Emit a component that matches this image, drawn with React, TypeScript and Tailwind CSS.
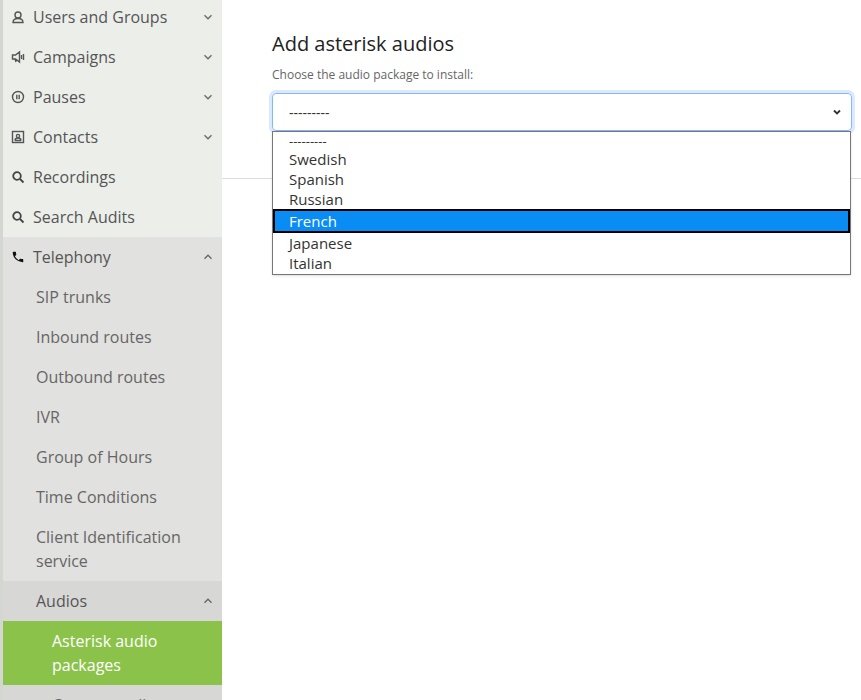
import React from 'react';

const Chevron = ({ up = false }: { up?: boolean }) => (
  <svg width="14" height="14" viewBox="0 0 12 12" fill="none" stroke="#666" strokeWidth="1.1" className="ml-auto">
    {up ? <path d="M3 7.5 6 4.5 9 7.5" /> : <path d="M3 4.5 6 7.5 9 4.5" />}
  </svg>
);

const IconUser = () => (
  <svg width="14" height="14" viewBox="0 0 14 14" fill="none" stroke="#555" strokeWidth="1.4">
    <circle cx="7" cy="5" r="3" />
    <path d="M2 12.5h10c0-2.5-2-4-5-4s-5 1.5-5 4z" />
  </svg>
);
const IconCampaign = () => (
  <svg width="14" height="14" viewBox="0 0 14 14" fill="none" stroke="#555" strokeWidth="1.4">
    <path d="M1.5 5h3l4-3v10l-4-3h-3z M4 9l1 3" />
    <path d="M10.5 5v4 M12.5 4v6" />
  </svg>
);
const IconPause = () => (
  <svg width="14" height="14" viewBox="0 0 14 14" fill="none" stroke="#555" strokeWidth="1.4">
    <circle cx="7" cy="7" r="5.5" />
    <path d="M5.8 4.8v4.4 M8.2 4.8v4.4" />
  </svg>
);
const IconContacts = () => (
  <svg width="14" height="14" viewBox="0 0 14 14" fill="none" stroke="#555" strokeWidth="1.4">
    <rect x="1.5" y="1.5" width="11" height="11" />
    <circle cx="7" cy="6" r="1.6" />
    <path d="M4 10.5h6 M4 10.5c0-1.5 1.3-2.5 3-2.5s3 1 3 2.5" />
  </svg>
);
const IconSearch = () => (
  <svg width="14" height="14" viewBox="0 0 14 14" fill="none" stroke="#444" strokeWidth="1.8">
    <circle cx="6" cy="6" r="3.8" />
    <path d="M9 9l3.5 3.5" />
  </svg>
);
const IconPhone = () => (
  <svg width="14" height="14" viewBox="0 0 24 24" fill="#111">
    <path d="M6.6 10.8a15 15 0 0 0 6.6 6.6l2.2-2.2c.3-.3.7-.4 1-.2 1.1.4 2.3.6 3.6.6.6 0 1 .4 1 1V20c0 .6-.4 1-1 1A17 17 0 0 1 3 4c0-.6.4-1 1-1h3.5c.6 0 1 .4 1 1 0 1.3.2 2.5.6 3.6.1.3 0 .7-.2 1z" />
  </svg>
);

const Top = ({ icon, label, chevron }: { icon: React.ReactNode; label: string; chevron?: boolean }) => (
  <div className="h-10 flex items-center pl-[8px] pr-[7px] gap-[8px] text-[#555]">
    <span className="w-[14px] flex justify-center">{icon}</span>
    <span>{label}</span>
    {chevron && <Chevron />}
  </div>
);

const Sub = ({ label }: { label: string }) => (
  <div className="py-[8px] pl-[33px] pr-4 leading-6 text-[#666]">{label}</div>
);

export default function App() {
  return (
    <div className="flex w-[861px] h-[700px] overflow-hidden bg-white text-[16px]" style={{ fontFamily: '"Open Sans", sans-serif' }}>
      <aside className="w-[222px] shrink-0 bg-[#eceeea] border-l-[3px] border-[#d4d6d2] -mt-[3px]">
        <Top icon={<IconUser />} label="Users and Groups" chevron />
        <Top icon={<IconCampaign />} label="Campaigns" chevron />
        <Top icon={<IconPause />} label="Pauses" chevron />
        <Top icon={<IconContacts />} label="Contacts" chevron />
        <Top icon={<IconSearch />} label="Recordings" />
        <Top icon={<IconSearch />} label="Search Audits" />
        <div className="bg-[#e1e1df]">
          <div className="h-10 flex items-center pl-[8px] pr-[7px] gap-[8px] text-[#555]">
            <span className="w-[14px] flex justify-center"><IconPhone /></span>
            <span>Telephony</span>
            <Chevron up />
          </div>
          <Sub label="SIP trunks" />
          <Sub label="Inbound routes" />
          <Sub label="Outbound routes" />
          <Sub label="IVR" />
          <Sub label="Group of Hours" />
          <Sub label="Time Conditions" />
          <Sub label="Client Identification service" />
          <div className="bg-[#d7d7d5]">
            <div className="h-10 flex items-center pl-[33px] pr-[7px] text-[#555]">
              <span>Audios</span>
              <Chevron up />
            </div>
            <div className="bg-[#8bc34a] text-white py-[8px] pl-[49px] pr-4 leading-6">Asterisk audio packages</div>
            <div className="py-[8px] pl-[49px] pr-4 leading-6 text-[#666]">Custom audios</div>
          </div>
        </div>
      </aside>
      <main className="flex-1 relative">
        <div className="px-[50px] pt-[30px] pb-[47px] border-b border-[#ddd]">
          <h1 className="text-[20px] text-[#222] font-medium leading-7">Add asterisk audios</h1>
          <label className="block mt-[8px] text-[12px] text-[#666] font-medium">Choose the audio package to install:</label>
          <div className="mt-[9px] -mr-[41px] h-[38px] border border-[#86b7fe] rounded-[4px] shadow-[0_0_0_3px_rgba(13,110,253,0.15)] flex items-center px-4 text-[14px] text-[#333]">
            <span>---------</span>
            <svg width="12" height="12" viewBox="0 0 12 12" fill="none" stroke="#333" strokeWidth="1.8" className="ml-auto -mr-2">
              <path d="M3 4.5 6 7.5 9 4.5" />
            </svg>
          </div>
        </div>
        <div className="absolute left-[50px] top-[131px] w-[579px] bg-white border border-[#777] text-[15px] leading-[20px] text-[#333] py-[1px] shadow">
          {['---------', 'Swedish', 'Spanish', 'Russian', 'French', 'Japanese', 'Italian'].map(o =>
            o === 'French' ? (
              <div key={o} className="bg-[#0a8cf5] text-white border-2 border-black pl-[14px]">{o}</div>
            ) : (
              <div key={o} className={`pl-4 ${o.startsWith('-') ? 'text-[13px] leading-[16px]' : ''}`}>{o}</div>
            )
          )}
        </div>
      </main>
    </div>
  );
}
